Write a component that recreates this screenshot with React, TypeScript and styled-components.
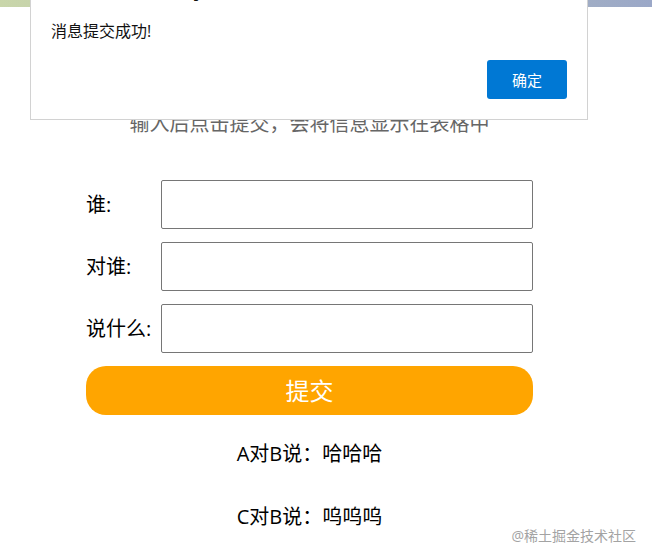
import React from 'react';
import styled, { createGlobalStyle } from 'styled-components';

const GlobalStyle = createGlobalStyle`
  body {
    margin: 0;
    background: #ffffff;
    font-family: "Open Sans", "Noto Sans CJK SC", sans-serif;
    color: #000;
  }
`;

const Page = styled.div`
  position: relative;
  min-height: 559px;
  overflow: hidden;
`;

const TopBar = styled.div`
  height: 7px;
  background: linear-gradient(to right, #c9d6aa 0%, #b4bfb8 50%, #9ba8c8 100%);
`;

const Main = styled.main`
  width: 447px;
  margin-left: 86px;
  padding-top: 102px;
`;

const Subtitle = styled.h2`
  margin: 0 0 41px;
  font-size: 20px;
  line-height: 30px;
  font-weight: 400;
  color: #666;
  text-align: center;
`;

const Form = styled.form`
  display: flex;
  flex-direction: column;
  gap: 13px;
`;

const Row = styled.div`
  display: flex;
  align-items: center;
`;

const Label = styled.label`
  width: 75px;
  flex: none;
  font-size: 20px;
  line-height: 28px;
  white-space: nowrap;
`;

const Input = styled.input`
  box-sizing: border-box;
  width: 372px;
  height: 49px;
  border: 1px solid #767676;
  border-radius: 2px;
  background: #fff;
  outline: none;
  padding: 0 8px;
  font-size: 18px;
`;

const SubmitButton = styled.button`
  height: 49px;
  padding: 0 0 3px;
  border: none;
  border-radius: 20px;
  background: #ffa500;
  color: #fff;
  font-family: inherit;
  font-size: 24px;
  cursor: pointer;
`;

const MessageList = styled.ul`
  list-style: none;
  margin: 7px 0 0;
  padding: 0;
`;

const MessageItem = styled.li`
  height: 63px;
  line-height: 63px;
  font-size: 20px;
  text-align: center;
`;

const Dialog = styled.div`
  position: absolute;
  top: -25px;
  left: 30px;
  box-sizing: border-box;
  width: 558px;
  height: 145px;
  padding: 6px 20px 0 20px;
  background: #fff;
  border: 1px solid #d2d2d2;
  display: flex;
  flex-direction: column;
`;

const DialogTitle = styled.div`
  font-size: 17px;
  line-height: 22px;
  font-weight: 700;
  color: #111;
  white-space: nowrap;
`;

const DialogText = styled.div`
  margin-top: 16px;
  font-size: 16px;
  line-height: 22px;
  color: #111;
`;

const DialogActions = styled.div`
  margin-top: 18px;
  display: flex;
  justify-content: flex-end;
`;

const ConfirmButton = styled.button`
  width: 80px;
  height: 39px;
  border: none;
  border-radius: 3px;
  background: #0078d4;
  color: #fff;
  font-family: inherit;
  font-size: 15px;
`;

const Watermark = styled.div`
  position: absolute;
  right: 16px;
  bottom: 14px;
  font-size: 14px;
  line-height: 18px;
  color: #a3a3a3;
  text-shadow: 0 0 1px #fff;
`;

const messages = [
  { from: 'A', to: 'B', text: '哈哈哈' },
  { from: 'C', to: 'B', text: '呜呜呜' },
];

const App: React.FC = () => {
  return (
    <Page>
      <GlobalStyle />
      <TopBar />
      <Main>
        <Subtitle>输入后点击提交，会将信息显示在表格中</Subtitle>
        <Form onSubmit={(e) => e.preventDefault()}>
          <Row>
            <Label>谁:</Label>
            <Input />
          </Row>
          <Row>
            <Label>对谁:</Label>
            <Input />
          </Row>
          <Row>
            <Label>说什么:</Label>
            <Input />
          </Row>
          <SubmitButton type="submit">提交</SubmitButton>
        </Form>
        <MessageList>
          {messages.map((m, i) => (
            <MessageItem key={i}>
              {m.from}对{m.to}说：{m.text}
            </MessageItem>
          ))}
        </MessageList>
      </Main>
      <Dialog>
        <DialogTitle>127.0.0.1:5500 显示</DialogTitle>
        <DialogText>消息提交成功!</DialogText>
        <DialogActions>
          <ConfirmButton>确定</ConfirmButton>
        </DialogActions>
      </Dialog>
      <Watermark>@稀土掘金技术社区</Watermark>
    </Page>
  );
};

export default App;
